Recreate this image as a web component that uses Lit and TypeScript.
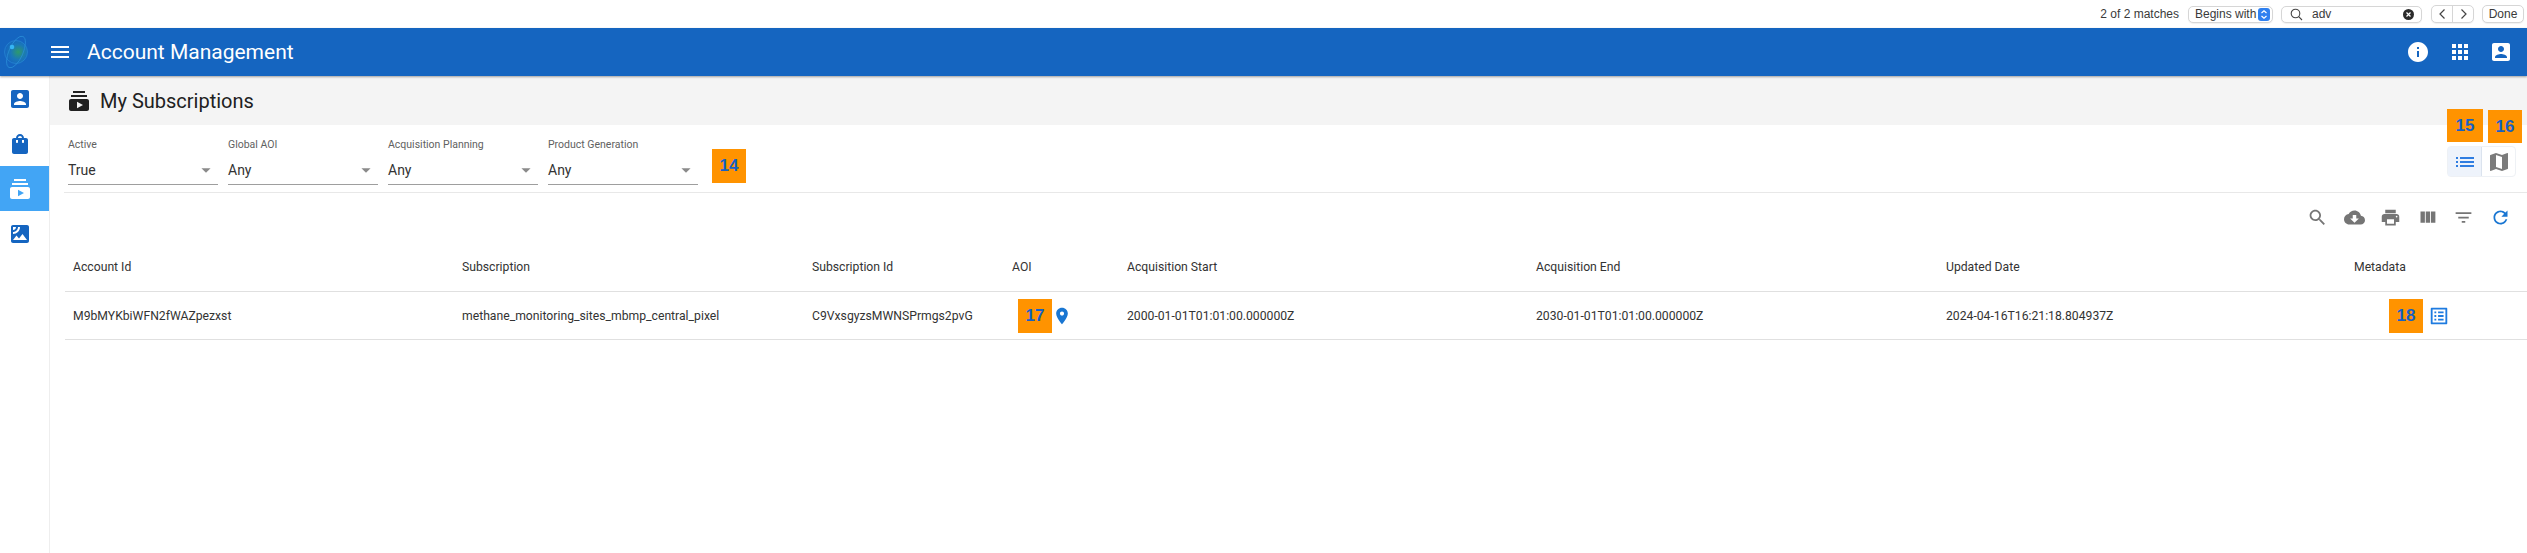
import { LitElement, html, css, svg } from 'lit';
import { customElement } from 'lit/decorators.js';

const ICONS: Record<string, string> = {
  menu: 'M3 18h18v-2H3v2zm0-5h18v-2H3v2zm0-7v2h18V6H3z',
  info: 'M12 2C6.48 2 2 6.48 2 12s4.48 10 10 10 10-4.48 10-10S17.52 2 12 2zm1 15h-2v-6h2v6zm0-8h-2V7h2v2z',
  apps: 'M4 8h4V4H4v4zm6 12h4v-4h-4v4zm-6 0h4v-4H4v4zm0-6h4v-4H4v4zm6 0h4v-4h-4v4zm6-10v4h4V4h-4zm-6 4h4V4h-4v4zm6 6h4v-4h-4v4zm0 6h4v-4h-4v4z',
  account: 'M3 5v14c0 1.1.89 2 2 2h14c1.1 0 2-.9 2-2V5c0-1.1-.9-2-2-2H5c-1.11 0-2 .9-2 2zm12 4c0 1.66-1.34 3-3 3s-3-1.34-3-3 1.34-3 3-3 3 1.34 3 3zm-9 8c0-2 4-3.1 6-3.1s6 1.1 6 3.1v1H6v-1z',
  bag: 'M18 6h-2c0-2.21-1.79-4-4-4S8 3.79 8 6H6c-1.1 0-2 .9-2 2v12c0 1.1.9 2 2 2h12c1.1 0 2-.9 2-2V8c0-1.1-.9-2-2-2zm-8 4c0 .55-.45 1-1 1s-1-.45-1-1V8h2v2zm2-6c1.1 0 2 .9 2 2h-4c0-1.1.9-2 2-2zm4 6c0 .55-.45 1-1 1s-1-.45-1-1V8h2v2z',
  subscriptions: 'M20 8H4V6h16v2zm-2-6H6v2h12V2zm4 10v8c0 1.1-.9 2-2 2H4c-1.1 0-2-.9-2-2v-8c0-1.1.9-2 2-2h16c1.1 0 2 .9 2 2zm-6 4l-6-3.27v6.53L16 16z',
  satellite: 'M19 3H5c-1.1 0-2 .9-2 2v14c0 1.1.9 2 2 2h14c1.1 0 2-.9 2-2V5c0-1.1-.9-2-2-2zM5 4.99h3C8 6.65 6.66 8 5 8V4.99zM5 12v-2c2.76 0 5-2.25 5-5.01h2C12 8.86 8.87 12 5 12zm0 6l3.5-4.5 2.5 3.01L14.5 12l4.5 6H5z',
  search: 'M15.5 14h-.79l-.28-.27C15.41 12.59 16 11.11 16 9.5 16 5.91 13.09 3 9.5 3S3 5.91 3 9.5 5.91 16 9.5 16c1.61 0 3.09-.59 4.23-1.57l.27.28v.79l5 4.99L20.49 19l-4.99-5zm-6 0C7.01 14 5 11.99 5 9.5S7.01 5 9.5 5 14 7.01 14 9.5 11.99 14 9.5 14z',
  cloud: 'M19.35 10.04C18.67 6.59 15.64 4 12 4 9.11 4 6.6 5.64 5.35 8.04 2.34 8.36 0 10.91 0 14c0 3.31 2.69 6 6 6h13c2.76 0 5-2.24 5-5 0-2.64-2.05-4.78-4.65-4.96zM17 13l-5 5-5-5h3V9h4v4h3z',
  print: 'M19 8H5c-1.66 0-3 1.34-3 3v6h4v4h12v-4h4v-6c0-1.66-1.34-3-3-3zm-3 11H8v-5h8v5zm3-7c-.55 0-1-.45-1-1s.45-1 1-1 1 .45 1 1-.45 1-1 1zm-1-9H6v4h12V3z',
  columns: 'M10 18h5V5h-5v13zm-6 0h5V5H4v13zM16 5v13h5V5h-5z',
  filter: 'M10 18h4v-2h-4v2zM3 6v2h18V6H3zm3 7h12v-2H6v2z',
  refresh: 'M17.65 6.35C16.2 4.9 14.21 4 12 4c-4.42 0-7.99 3.58-7.99 8s3.57 8 7.99 8c3.73 0 6.84-2.55 7.73-6h-2.08c-.82 2.33-3.04 4-5.65 4-3.31 0-6-2.69-6-6s2.69-6 6-6c1.66 0 3.14.69 4.22 1.78L13 11h7V4l-2.35 2.35z',
  list: 'M3 13h2v-2H3v2zm0 4h2v-2H3v2zm0-8h2V7H3v2zm4 4h14v-2H7v2zm0 4h14v-2H7v2zM7 7v2h14V7H7z',
  map: 'M20.5 3l-.16.03L15 5.1 9 3 3.36 4.9c-.21.07-.36.25-.36.48V20.5c0 .28.22.5.5.5l.16-.03L9 18.9l6 2.1 5.64-1.9c.21-.07.36-.25.36-.48V3.5c0-.28-.22-.5-.5-.5zM15 19l-6-2.11V5l6 2.11V19z',
  room: 'M12 2C8.13 2 5 5.13 5 9c0 5.25 7 13 7 13s7-7.75 7-13c0-3.87-3.13-7-7-7zm0 9.5c-1.38 0-2.5-1.12-2.5-2.5s1.12-2.5 2.5-2.5 2.5 1.12 2.5 2.5-1.12 2.5-2.5 2.5z',
  listAlt: 'M19 5v14H5V5h14m1.1-2H3.9c-.5 0-.9.4-.9.9v16.2c0 .4.4.9.9.9h16.2c.4 0 .9-.5.9-.9V3.9c0-.5-.5-.9-.9-.9zM11 7h6v2h-6V7zm0 4h6v2h-6v-2zm0 4h6v2h-6v-2zM7 7h2v2H7V7zm0 4h2v2H7v-2zm0 4h2v2H7v-2z',
  arrow: 'M7 10l5 5 5-5z',
};

const icon = (name: string) =>
  html`<svg class="icon" viewBox="0 0 24 24">${svg`<path d=${ICONS[name]}></path>`}</svg>`;

const FILTERS = [
  { label: 'Active', value: 'True' },
  { label: 'Global AOI', value: 'Any' },
  { label: 'Acquisition Planning', value: 'Any' },
  { label: 'Product Generation', value: 'Any' },
];

const COLUMNS = ['Account Id', 'Subscription', 'Subscription Id', 'AOI', 'Acquisition Start', 'Acquisition End', 'Updated Date', 'Metadata'];

@customElement('app-root')
export class AppRoot extends LitElement {
  static styles = css`
    :host {
      display: flex;
      flex-direction: column;
      width: 2527px;
      height: 553px;
      background: #fff;
      font-family: Roboto, "Liberation Sans", sans-serif;
      color: rgba(0, 0, 0, 0.87);
      overflow: hidden;
    }
    .icon { width: 24px; height: 24px; fill: currentColor; display: block; flex: none; }

    .findbar {
      height: 28px;
      display: flex;
      align-items: center;
      justify-content: flex-end;
      padding-right: 3px;
      font-family: "Liberation Sans", Arial, sans-serif;
      font-size: 12px;
      color: #3a3a3a;
      box-sizing: border-box;
      white-space: nowrap;
    }
    .matches { margin-right: 9px; }
    .fb-box {
      height: 17px;
      display: flex;
      align-items: center;
      border: 1px solid #d6d6d6;
      border-radius: 5px;
      box-sizing: border-box;
      background: #fff;
      box-shadow: 0 1px 1px rgba(0, 0, 0, 0.06);
    }
    .fb-select { width: 85px; padding: 0 2px 0 6px; justify-content: space-between; margin-right: 8px; }
    .fb-stepper { width: 12px; height: 13px; border-radius: 3px; background: #2f80f0; flex: none; }
    .fb-stepper svg { display: block; width: 12px; height: 13px; fill: none; stroke: #fff; stroke-width: 1.2; }
    .fb-search { width: 141px; padding: 0 7px 0 8px; margin-right: 9px; }
    .fb-search .mag { width: 13px; height: 13px; fill: none; stroke: #444; stroke-width: 1.1; margin-right: 9px; }
    .fb-search .q { flex: 1; }
    .fb-clear { width: 11px; height: 11px; }
    .fb-nav { width: 43px; height: 18px; margin-right: 8px; }
    .fb-nav span { flex: 1; height: 100%; display: flex; align-items: center; justify-content: center; }
    .fb-nav span + span { border-left: 1px solid #d6d6d6; }
    .fb-nav svg { width: 9px; height: 12px; fill: none; stroke: #444; stroke-width: 1.2; }
    .fb-done { width: 42px; height: 18px; justify-content: center; }

    .appbar {
      height: 48px;
      display: flex;
      align-items: center;
      background: #1565c0;
      color: #fff;
      flex: none;
      position: relative;
      box-shadow: 0 1px 2px rgba(0, 0, 0, 0.35);
    }
    .logo { width: 26px; height: 36px; margin-left: 3px; flex: none; }
    .burger { margin-left: 19px; width: 24px; height: 24px; }
    .app-title { margin-left: 15px; font-size: 21px; font-weight: 400; flex: 1; }
    .app-actions { display: flex; gap: 17.5px; padding-right: 14px; }

    .body { flex: 1; display: flex; min-height: 0; }
    .sidebar { width: 49px; border-right: 1px solid #eeeeee; flex: none; color: #1565c0; }
    .nav-item { height: 45px; display: flex; align-items: center; padding-left: 8px; }
    .nav-item.active { background: #42a5f5; color: #fff; }

    .main { flex: 1; min-width: 0; }
    .title-bar {
      height: 49px;
      background: #f4f4f4;
      display: flex;
      align-items: center;
      padding-left: 17px;
      gap: 9px;
      font-size: 20px;
      color: #212121;
    }
    .filters {
      height: 67px;
      margin-left: 14px;
      padding: 0 11px 0 4px;
      border-bottom: 1px solid #e8e8e8;
      display: flex;
      gap: 10px;
    }
    .filter { width: 150px; padding-top: 13px; box-sizing: border-box; }
    .filter label { display: block; font-size: 10.5px; line-height: 14px; color: #616161; }
    .select {
      margin-top: 3px;
      height: 30px;
      display: flex;
      align-items: center;
      justify-content: space-between;
      border-bottom: 1px solid #9e9e9e;
      box-sizing: border-box;
      font-size: 14px;
      color: #333;
      padding-right: 1px;
    }
    .select .icon { color: #8a8a8a; width: 22px; height: 22px; }
    .badge {
      width: 34px;
      height: 34px;
      background: #ff9300;
      color: #1660c4;
      font-family: "Liberation Sans", Arial, sans-serif;
      font-weight: 700;
      font-size: 17px;
      display: flex;
      align-items: center;
      justify-content: center;
      flex: none;
    }
    .filters > .badge { margin: 24px 0 0 4px; }
    .view-toggle {
      margin-left: auto;
      margin-top: 21px;
      width: 69px;
      height: 31px;
      display: flex;
      position: relative;
      border: 1px solid #eef1f5;
      border-radius: 4px;
      box-sizing: border-box;
    }
    .view-toggle .btn { flex: 1; display: flex; align-items: center; justify-content: center; color: #7b7b7b; }
    .view-toggle .btn.on { background: #eef3fb; color: #2f7de1; border-right: 1px solid #dbe3ee; }
    .view-toggle .badge { position: absolute; height: 33px; }
    .view-toggle .b15 { left: -1px; top: -38px; width: 36px; }
    .view-toggle .b16 { left: 40px; top: -37px; }

    .toolbar {
      height: 49px;
      display: flex;
      align-items: center;
      justify-content: flex-end;
      gap: 15.6px;
      padding-right: 16px;
      color: #757575;
    }
    .toolbar .icon { width: 21px; height: 21px; }
    .toolbar .icon:last-child { color: #1976d2; }

    .table { margin-left: 15px; }
    .row {
      display: grid;
      grid-template-columns: 389px 350px 200px 115px 409px 410px 408px 1fr;
      align-items: center;
      border-bottom: 1px solid #e0e0e0;
      font-size: 12.2px;
      color: #333;
    }
    .row.head { height: 49px; }
    .row.data { height: 47px; }
    .cell { padding-left: 8px; display: flex; align-items: center; white-space: nowrap; }
    .cell .badge { margin-left: 6px; }
    .pin { color: #1976d2; }
    .pin .icon { width: 20px; height: 20px; }
    .meta .badge { margin-left: 35px; }
    .meta-icon { color: #1e7be0; margin-left: 5px; }
    .meta-icon .icon { width: 22px; height: 22px; }
  `;

  render() {
    return html`
      <div class="findbar">
        <span class="matches">2 of 2 matches</span>
        <div class="fb-box fb-select">
          <span>Begins with</span>
          <span class="fb-stepper"><svg viewBox="0 0 12 13"><path d="M3.5 5l2.5-2.2L8.500 5M3.500 8l2.500 2.200L8.500 8"></path></svg></span>
        </div>
        <div class="fb-box fb-search">
          <svg class="mag" viewBox="0 0 13 13"><circle cx="5.500" cy="5.500" r="4.300"></circle><path d="M8.700 8.700L12 12"></path></svg>
          <span class="q">adv</span>
          <svg class="fb-clear" viewBox="0 0 11 11"><circle cx="5.500" cy="5.500" r="5.500" fill="#2b2b2b"></circle><path d="M3.500 3.500l4 4M7.500 3.500l-4 4" stroke="#fff" stroke-width="1.200"></path></svg>
        </div>
        <div class="fb-box fb-nav">
          <span><svg viewBox="0 0 9 12"><path d="M6.500 1.500L2 6l4.500 4.500"></path></svg></span>
          <span><svg viewBox="0 0 9 12"><path d="M2.500 1.500L7 6l-4.500 4.500"></path></svg></span>
        </div>
        <div class="fb-box fb-done">Done</div>
      </div>

      <header class="appbar">
        <svg class="logo" viewBox="0 0 26 36">
          <defs>
            <radialGradient id="globe" cx="60%" cy="50%" r="60%">
              <stop offset="0%" stop-color="#2e9a6b"></stop>
              <stop offset="55%" stop-color="#1a78b8"></stop>
              <stop offset="100%" stop-color="#1565c0"></stop>
            </radialGradient>
          </defs>
          <circle cx="13" cy="18" r="11.500" fill="url(#globe)" stroke="#2a8fd8" stroke-width="0.600"></circle>
          <ellipse cx="13" cy="18" rx="7" ry="17" transform="rotate(24 13 18)" fill="none" stroke="#2a8fd8" stroke-width="0.700"></ellipse>
          <circle cx="9" cy="13" r="2.300" fill="#35b5f5"></circle>
        </svg>
        <span class="burger">${icon('menu')}</span>
        <span class="app-title">Account Management</span>
        <div class="app-actions">${icon('info')}${icon('apps')}${icon('account')}</div>
      </header>

      <div class="body">
        <nav class="sidebar">
          <div class="nav-item">${icon('account')}</div>
          <div class="nav-item">${icon('bag')}</div>
          <div class="nav-item active">${icon('subscriptions')}</div>
          <div class="nav-item">${icon('satellite')}</div>
        </nav>
        <main class="main">
          <div class="title-bar">${icon('subscriptions')}<span>My Subscriptions</span></div>
          <div class="filters">
            ${FILTERS.map(
              (f) => html`
                <div class="filter">
                  <label>${f.label}</label>
                  <div class="select"><span>${f.value}</span>${icon('arrow')}</div>
                </div>
              `
            )}
            <div class="badge">14</div>
            <div class="view-toggle">
              <div class="badge b15">15</div>
              <div class="badge b16">16</div>
              <div class="btn on">${icon('list')}</div>
              <div class="btn">${icon('map')}</div>
            </div>
          </div>
          <div class="toolbar">
            ${icon('search')}${icon('cloud')}${icon('print')}${icon('columns')}${icon('filter')}${icon('refresh')}
          </div>
          <div class="table">
            <div class="row head">${COLUMNS.map((c) => html`<div class="cell">${c}</div>`)}</div>
            <div class="row data">
              <div class="cell">M9bMYKbiWFN2fWAZpezxst</div>
              <div class="cell">methane_monitoring_sites_mbmp_central_pixel</div>
              <div class="cell">C9VxsgyzsMWNSPrmgs2pvG</div>
              <div class="cell"><div class="badge">17</div><span class="pin">${icon('room')}</span></div>
              <div class="cell">2000-01-01T01:01:00.000000Z</div>
              <div class="cell">2030-01-01T01:01:00.000000Z</div>
              <div class="cell">2024-04-16T16:21:18.804937Z</div>
              <div class="cell meta"><div class="badge">18</div><span class="meta-icon">${icon('listAlt')}</span></div>
            </div>
          </div>
        </main>
      </div>
    `;
  }
}
